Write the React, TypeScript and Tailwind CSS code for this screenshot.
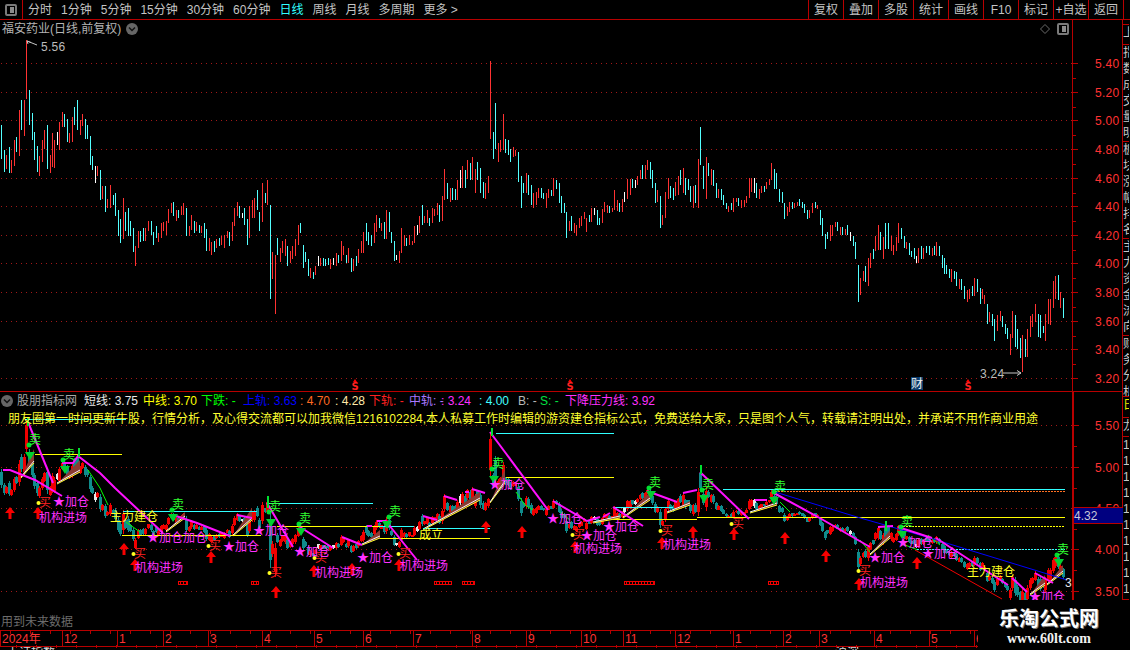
import React from "react";

type Bar = { x: number; t: number; b: number; c: string };

// bars read off the chart: x top bottom colour (crop coordinates at 3x)
const parse = (s: string, ox: number, oy: number): Bar[] =>
  s
    .trim()
    .split("|")
    .map((r) => {
      const [x, t, b, c] = r.trim().split(" ");
      return { x: Math.round(ox + Number(x) / 3), t: oy + Number(t) / 3, b: oy + Number(b) / 3, c };
    });

const bars: Bar[] = [
  ...parse(
    "4 255 357 c|13 330 395 c|19 345 387 r|28 321 399 c|34 360 399 r|43 300 378 r|49 291 336 c|58 210 348 r|64 180 270 c|73 180 288 r|79 0 177 r|88 150 255 c|95 219 300 c|103 276 360 c|110 318 396 c|118 348 408 r|127 300 366 r|133 270 327 r|142 255 387 c|149 345 399 r|157 279 381 r|163 300 384 r|172 276 315 w|178 246 330 r|187 216 261 r|193 222 261 c|202 237 306 c|208 279 309 r|217 231 306 r|223 201 255 c|232 180 270 c|241 240 285 r|247 222 258 r|256 237 297 c|262 255 297 c|271 288 375 c|277 348 390 c|286 378 429 w|292 378 408 r|301 390 480 c|307 438 477 r|316 438 516 c|322 477 504 r|331 435 504 r|340 465 495 c|346 459 528 c|355 510 588 c|361 537 609 c|370 474 597 r|376 516 573 c|385 504 588 c|391 543 588 c|400 564 636 c|406 618 678 r|415 573 624 r|421 573 606 c|430 564 603 c|436 564 603 r|445 543 573 r|454 543 585 c|460 576 615 c|469 558 594 c|475 579 606 r|484 549 594 r|490 546 573 r|499 543 585 r|505 507 549 r|514 489 519 r|520 486 528 c|529 510 543 r|535 510 534 c|544 498 525 r|550 489 525 r|559 504 588 c|568 558 588 r|574 525 570 r|583 543 579 c|589 546 573 r|598 555 579 c|604 558 579 r|613 549 594 c|619 567 633 c|628 594 633 r|634 606 645 r|643 603 636 c|649 597 624 r|658 594 618 c|664 588 615 r|673 585 624 r|682 573 594 r|688 576 618 c|697 546 603 r|703 504 558 r|712 486 528 r|718 498 534 c|727 519 534 w|733 504 555 c|742 537 615 c|748 498 594 r|757 480 534 r|763 474 534 r|772 450 510 c|778 516 573 c|787 429 546 r|796 459 489 c|802 420 495 r|811 495 777 c|817 636 717 r|826 645 822 r|832 594 645 c|841 624 666 r|847 603 639 r|856 597 648 r|862 618 678 c|871 633 669 r|877 618 657 r|886 597 648 r|895 555 615 r|901 549 579 c|910 615 684 c|916 636 666 c|925 657 708 c|931 684 714 r|940 696 717 c|946 678 705 r|955 648 678 w|961 654 678 r|970 654 678 c|976 657 678 c|985 654 675 c|991 657 687 r|1000 654 675 w|1009 639 678 r|1015 645 669 c|1024 603 663 r|1030 618 645 r|1039 645 669 c|1045 624 669 r|1054 654 696 c|1060 657 693 r|1069 648 678 c|1075 627 669 r|1084 603 639 r|1090 576 639 r|1099 549 603 c|1105 576 615 c|1114 585 618 c|1123 549 609 r|1129 525 576 r|1138 534 564 c",
    0,
    40
  ),
  ...parse(
    "4 519 543 r|13 516 567 c|19 480 567 r|28 486 546 c|34 546 579 c|43 573 633 c|49 615 630 w|58 603 639 r|64 534 609 r|73 555 588 r|79 564 588 c|88 555 585 r|97 573 585 r|103 528 579 r|112 525 555 w|118 498 549 r|127 465 525 c|133 498 519 r|142 480 519 r|148 504 528 c|157 474 519 r|163 477 498 r|172 459 495 r|178 465 516 c|187 438 513 r|193 357 450 r|202 399 447 c|211 414 456 r|217 414 450 c|226 417 450 c|232 390 450 r|241 360 414 w|247 348 414 r|256 360 414 c|262 330 387 r|271 339 390 c|277 321 390 r|286 357 429 r|292 336 390 c|301 354 429 c|310 396 444 c|316 399 447 r|325 378 429 r|331 33 267 r|340 246 327 c|346 159 297 c|355 279 336 r|361 270 306 r|370 192 300 r|376 267 309 c|385 270 315 c|391 297 336 c|400 291 321 r|406 300 318 r|415 306 396 c|424 378 474 c|430 399 429 c|439 369 429 r|445 375 435 c|454 405 465 c|460 429 474 r|469 426 465 r|475 414 444 r|484 414 444 c|490 429 447 c|499 429 474 r|505 417 444 r|514 420 438 c|520 384 438 r|529 390 417 c|538 399 459 c|544 438 489 c|553 459 489 c|559 486 564 c|568 513 543 r|574 498 543 c|583 519 549 r|589 525 558 r|598 504 534 r|604 498 528 r|613 486 507 r|619 504 546 r|628 495 516 c|634 474 516 r|643 474 495 w|652 480 525 c|658 504 525 c|667 477 519 r|673 456 486 r|682 465 489 r|688 468 489 c|697 474 486 r|703 420 480 r|712 450 483 r|718 459 486 c|727 447 486 r|733 426 456 w|742 387 447 r|751 387 435 r|757 387 414 c|766 390 414 w|772 378 405 r|781 360 387 r|787 345 387 c|796 345 387 r|802 330 360 r|811 336 387 c|817 360 414 c|826 399 459 c|832 420 456 r|841 438 534 c|847 495 525 r|856 426 504 r|865 384 447 r|871 408 444 c|880 414 450 c|886 396 438 r|895 378 435 r|901 360 405 c|910 354 429 r|916 384 435 c|925 387 420 c|931 408 456 c|940 408 474 r|946 405 459 c|955 327 474 r|961 231 345 c|970 348 417 c|979 321 447 r|985 339 378 c|994 357 405 r|1000 360 408 c|1009 399 444 c|1015 417 444 r|1024 417 450 c|1030 435 465 c|1039 459 477 c|1045 468 486 r|1054 459 480 c|1060 444 486 r|1069 444 456 r|1075 444 468 c|1084 450 474 r|1093 450 471 r|1099 438 459 r|1108 384 444 r",
    380,
    50
  ),
  ...parse(
    "4 174 216 r|13 174 219 w|19 189 234 c|28 207 237 r|34 198 219 r|43 198 216 c|49 186 207 r|58 177 195 r|64 129 180 r|73 147 207 c|79 159 207 c|88 207 246 c|97 216 249 c|103 249 297 c|112 261 288 r|118 246 276 r|127 246 267 c|133 249 264 r|142 246 258 r|148 237 258 c|157 246 264 c|163 252 279 c|172 270 297 c|178 270 294 r|187 249 279 r|196 246 264 c|202 255 267 r|211 270 315 c|217 294 348 c|226 342 387 c|232 336 357 c|241 315 363 r|247 315 348 r|256 306 321 r|262 306 333 c|271 321 345 r|277 321 345 c|286 327 345 r|292 315 345 c|301 336 363 w|310 348 378 c|316 366 417 c|325 435 546 c|331 474 525 r|340 453 483 r|346 438 486 c|355 414 498 r|361 399 444 r|370 387 417 c|376 348 393 r|385 315 390 r|391 336 390 c|400 351 417 r|406 309 387 c|415 309 387 c|424 348 393 r|430 375 405 r|439 351 393 r|445 309 369 r|454 324 357 c|463 348 384 c|469 366 387 r|478 369 405 c|484 393 411 c|493 384 417 c|499 408 429 w|505 384 429 r|514 378 417 c|520 384 417 r|529 378 399 c|538 378 405 c|547 384 408 r|553 378 405 c|559 366 408 r|568 378 408 c|577 405 444 c|583 414 462 c|589 435 462 c|598 447 474 c|604 447 486 r|613 453 477 c|619 456 498 c|628 477 507 r|634 477 510 c|643 498 537 c|652 510 546 r|658 507 537 r|667 498 528 c|673 474 528 r|682 477 516 c|691 504 552 c|697 507 537 r|703 525 552 r|712 552 612 c|718 576 606 r|727 582 618 c|733 597 663 c|742 585 633 r|751 573 603 r|757 588 621 c|766 612 642 c|772 624 657 c|781 642 705 r|787 573 654 r|796 585 681 c|802 627 687 c|811 654 714 c|817 645 756 r|826 657 711 c|832 627 711 r|841 588 651 r|847 582 621 r|856 552 606 r|865 582 651 c|871 585 654 c|880 618 639 c|886 582 663 r|895 537 612 r|901 537 615 r|910 483 564 r|916 468 537 r|925 465 540 c|931 516 564 r|940 534 594 c",
    750,
    120
  ),
];

const RED = "#b80000";
const TOP_COLORS: Record<string, string> = { c: "#54ffff", r: "#ff3232", w: "#ffffff" };
const LOW_COLORS: Record<string, string> = { c: "#0f8c8c", r: "#f00000", w: "#e8e8e8" };

// the lower pane shows the same bars on its own price scale
const toLow = (y: number) => 433.2 + (y - 63) * 0.572;

const MAGENTA_LINES = [
  "3,470 10,470 35,480 62,496",
  "28,422 53,483",
  "62,463 73,463 78,456 100,473 115,488 163,533",
  "173,515 197,523 230,536",
  "237,515 252,518",
  "267,503 293,547",
  "300,527 333,548",
  "342,537 362,545",
  "367,526 372,526",
  "377,521 385,521",
  "385,520 417,560",
  "423,516 437,520",
  "444,496 457,500",
  "465,492 469,492",
  "472,489 485,493",
  "490,432 548,510",
  "553,501 587,521 600,517",
  "603,517 610,513",
  "613,507 643,526",
  "647,491 677,502",
  "683,493 697,490",
  "700,472 749,519",
  "755,500 767,500",
  "772,492 818,517 870,547",
  "878,527 893,526",
  "898,527 932,538",
  "936,538 1008,585",
  "1012,578 1027,592",
  "1035,573 1053,583",
];

const H_LINES: [number, number, number, string, boolean?][] = [
  [35, 122, 454, "#ffff00"],
  [25, 126, 419, "#30ffff"],
  [123, 257, 511, "#30ffff"],
  [122, 261, 535, "#ffff00"],
  [267, 373, 503, "#30ffff"],
  [277, 413, 526, "#ffff00"],
  [380, 414, 526, "#30ffff"],
  [423, 490, 528, "#30ffff"],
  [380, 490, 538, "#ffff00"],
  [496, 614, 433, "#30ffff"],
  [506, 614, 477, "#ffff00"],
  [613, 673, 507, "#30ffff"],
  [613, 697, 519, "#ffff00"],
  [723, 1065, 489, "#30ffff"],
  [772, 1065, 491, "#ff7020", true],
  [697, 1065, 517, "#ffff00"],
  [900, 1065, 526, "#ffff00", true],
  [917, 1065, 549, "#30ffff", true],
];

const WEDGES: [number, number, number, number, number][] = [
  [21, 478, 34, 463, 14],
  [57, 484, 80, 472, 12],
  [166, 532, 185, 518, 6],
  [233, 536, 252, 520, 12],
  [362, 545, 380, 538, 8],
  [423, 530, 480, 500, 8],
  [490, 503, 505, 483, 14],
  [593, 523, 620, 518, 3],
  [623, 518, 650, 500, 8],
  [667, 513, 690, 505, 4],
  [750, 513, 777, 505, 4],
  [870, 555, 890, 538, 8],
  [1030, 595, 1045, 585, 10],
  [1047, 585, 1063, 573, 8],
];

const THIN_GREEN = [
  "88,470 100,488 108,505",
  "126,522 140,532",
  "516,492 525,505 533,510",
  "560,512 570,520",
  "780,502 790,512",
  "860,540 870,552",
  "905,545 918,550",
  "928,535 940,545",
];

const SELLS = [
  [35, 440, 30, 456],
  [69, 455, 65, 470],
  [178, 505, 173, 518],
  [275, 507, 271, 523],
  [305, 519, 301, 532],
  [395, 512, 387, 525],
  [498, 464, 494, 480],
  [655, 483, 651, 495],
  [708, 485, 704, 499],
  [780, 487, 774, 501],
  [907, 522, 902, 535],
  [1063, 550, 1059, 563],
];

const SPIKES = [
  [27, 417, 426],
  [78, 448, 457],
  [267, 496, 508],
  [491, 428, 436],
  [700, 465, 474],
  [885, 521, 531],
];

const BUYS = [
  [45, 503],
  [140, 554],
  [215, 546],
  [276, 573],
  [321, 558],
  [405, 554],
  [579, 535],
  [667, 531],
  [738, 524],
  [865, 571],
];

const ARROWS = [
  [10, 513],
  [38, 513],
  [124, 549],
  [135, 565],
  [211, 557],
  [276, 592],
  [314, 571],
  [352, 569],
  [399, 565],
  [486, 527],
  [522, 532],
  [575, 547],
  [662, 543],
  [693, 532],
  [734, 534],
  [785, 538],
  [826, 556],
  [917, 563],
  [859, 584],
];

const ENTRIES = [
  [39, 518],
  [135, 568],
  [315, 573],
  [400, 566],
  [574, 549],
  [663, 545],
  [860, 583],
];

const ADDS: [number, number, string][] = [
  [53, 502, "★加仓"],
  [147, 538, "★加仓加仓"],
  [223, 547, "★加仓"],
  [253, 531, "★加仓"],
  [294, 552, "★加仓"],
  [357, 558, "★加仓"],
  [489, 485, "★加仓"],
  [547, 519, "★加仓"],
  [581, 536, "★加仓"],
  [603, 527, "★加仓"],
  [869, 558, "★加仓"],
  [897, 543, "★加仓"],
  [922, 554, "★加仓"],
  [1029, 597, "★加仓"],
];

const SMALL_RECTS = [
  [178, 187],
  [251, 258],
  [434, 451],
  [462, 474],
  [624, 654],
  [768, 778],
];

const TOP_TICKS = ["5.40", "5.20", "5.00", "4.80", "4.60", "4.40", "4.20", "4.00", "3.80", "3.60", "3.40", "3.20"];
const TOP_Y = [63, 92, 120, 149, 178, 206, 235, 263, 292, 321, 349, 378];
const LOW_TICKS: [string, number][] = [
  ["5.50", 425],
  ["5.00", 467],
  ["4.50", 508],
  ["4.00", 549],
  ["3.50", 591],
];

const PERIODS = ["分时", "1分钟", "5分钟", "15分钟", "30分钟", "60分钟", "日线", "周线", "月线", "多周期"];
const ACTIONS = ["复权", "叠加", "多股", "统计", "画线", "F10", "标记", "+自选", "返回"];

const LEGEND: [string, string, string][] = [
  ["短线: 3.75", "#e8e8e8", "w-[59px]"],
  ["中线: 3.70", "#ffff00", "w-[58px]"],
  ["下跌: -", "#00ff00", "w-[42px]"],
  ["上轨: 3.63", "#0000ff", "w-[57px]"],
  [": 4.70", "#ff6a20", "w-[35px]"],
  [": 4.28", "#ffe9a8", "w-[34px]"],
  ["下轨: -", "#ff2020", "w-[40px]"],
  ["中轨: -", "#a878ff", "w-[32px]"],
  [": 3.24", "#ff30ff", "w-[38px]"],
  [": 4.00", "#40ffff", "w-[39px]"],
  ["B: -", "#b8b8b8", "w-[22px]"],
  ["S: -", "#00e040", "w-[25px]"],
  ["下降压力线: 3.92", "#ff30ff", "w-[110px]"],
];

const MONTHS: [string, number][] = [
  ["2024年", 62],
  ["12", 55],
  ["1", 46],
  ["2", 45],
  ["3", 54],
  ["4", 52],
  ["5", 49],
  ["6", 50],
  ["7", 59],
  ["8", 54],
  ["9", 55],
  ["10", 42],
  ["11", 52],
  ["12", 58],
  ["1", 50],
  ["2", 36],
  ["3", 55],
  ["4", 55],
  ["5", 45],
  ["6", 4],
];

const STRIP: { h: string; text: string; color?: string }[] = [
  { h: "h-[5px]", text: "" },
  { h: "h-[20px]", text: "上" },
  { h: "h-[97px]", text: "指数成交量明细" },
  { h: "h-[97px]", text: "板块涨幅排名" },
  { h: "h-[97px]", text: "主力资金流向" },
  { h: "h-[61px]", text: "财务分析" },
  { h: "h-[21px]", text: "日", color: "#e8e800" },
  { h: "h-[19px]", text: "龙" },
  { h: "h-[163px]", text: "1111111111" },
];

const PaneIcon = () => (
  <div className="flex h-[12px] w-[12px] justify-end rounded-[2px] border-2 border-[#7a7a7a] p-px">
    <div className="w-[4px] bg-[#8c8c8c]" />
  </div>
);

const DownBadge = () => (
  <svg width="12" height="12" viewBox="0 0 12 12">
    <circle cx="6" cy="6" r="6" fill="#666666" />
    <path d="M3 4.5 L6 7.5 L9 4.5" fill="none" stroke="#111111" strokeWidth="1.5" />
  </svg>
);

const TopChart = () => (
  <svg width="1072" height="371" viewBox="0 20 1072 371" className="block" shapeRendering="crispEdges">
    {TOP_Y.map((y) => (
      <line key={y} x1="1" x2="1072" y1={y + 0.5} y2={y + 0.5} stroke="#a01818" strokeDasharray="1 4" />
    ))}
    {bars.map((b, i) => (
      <rect key={i} x={b.x} y={b.t} width="1" height={b.b - b.t} fill={TOP_COLORS[b.c]} />
    ))}
    <g shapeRendering="auto" fill="none" stroke="#c4c4c4">
      <path d="M27 41 L37 45" />
      <path d="M27 41 L31 42.5 M27 41 L28 44" />
      <path d="M1003 373 L1021 373 M1017 370.5 L1021 373 L1017 375.5" />
    </g>
    <text x="41" y="46.5" fontSize="12" fill="#bcbcbc" dominantBaseline="central" letterSpacing="0.3">5.56</text>
    <text x="980" y="374" fontSize="12" fill="#bcbcbc" dominantBaseline="central" letterSpacing="0.3">3.24</text>
    {[355, 570, 968].map((x) => (
      <g key={x}>
        <path d={`M${x - 2} 382 L${x + 2} 382 L${x} 379 Z`} fill="#ff0000" shapeRendering="auto" />
        <text x={x} y="390" fontSize="10" fontWeight="700" fill="#ff2020" textAnchor="middle" fontFamily="'DejaVu Sans',sans-serif">
          S
        </text>
      </g>
    ))}
  </svg>
);

const LowerChart = () => (
  <svg width="1072" height="238" viewBox="0 392 1072 238" className="block" shapeRendering="crispEdges">
    {LOW_TICKS.map(([t, y]) => (
      <line key={t} x1="1" x2="1072" y1={y + 0.5} y2={y + 0.5} stroke="#a01818" strokeDasharray="1 4" />
    ))}
    {bars.map((b, i) => {
      const t = toLow(b.t);
      const h = toLow(b.b) - t;
      return (
        <g key={i} fill={LOW_COLORS[b.c]}>
          <rect x={b.x} y={t} width="1" height={h} />
          <rect x={b.x - 1} y={t + h * 0.15} width="3" height={Math.max(h * 0.7, 1)} />
        </g>
      );
    })}
    {WEDGES.map(([x1, y1, x2, y2, th], i) => (
      <g key={i} shapeRendering="auto">
        <polygon points={`${x1},${y1} ${x2},${y2} ${x2},${y2 - th}`} fill="#8b3a32" />
        <line x1={x1} y1={y1} x2={x2} y2={y2} stroke="#ffff30" />
        <line x1={x1} y1={y1 - 1} x2={x2} y2={y2 - 2} stroke="#f4f4f4" />
      </g>
    ))}
    {THIN_GREEN.map((p) => (
      <polyline key={p} points={p} fill="none" stroke="#00ff00" shapeRendering="auto" />
    ))}
    {H_LINES.map(([x1, x2, y, c, dotted]) => (
      <line
        key={`${x1}-${y}`}
        x1={x1}
        x2={x2}
        y1={y + 0.5}
        y2={y + 0.5}
        stroke={c}
        strokeDasharray={dotted ? "2 1" : undefined}
      />
    ))}
    <polyline points="775,492 857,517 930,538 1067,580" fill="none" stroke="#0000ff" shapeRendering="auto" />
    <polyline points="915,550 1002,599" fill="none" stroke="#f00000" shapeRendering="auto" />
    {MAGENTA_LINES.map((p) => (
      <polyline key={p} points={p} fill="none" stroke="#ff10ff" strokeWidth="2" shapeRendering="auto" />
    ))}
    {SMALL_RECTS.map(([x1, x2]) => (
      <g key={x1} fill="none" stroke="#f00000">
        <rect x={x1 + 0.5} y="581.5" width={x2 - x1} height="3" />
        <line x1={x1 + 2} x2={x2} y1="583" y2="583" strokeWidth="2" strokeDasharray="1 2" />
      </g>
    ))}
    {SPIKES.map(([x, y1, y2]) => (
      <rect key={x} x={x - 0.5} y={y1} width="2" height={y2 - y1} fill="#00e030" />
    ))}
    {SELLS.map(([tx, ty, ax, ay]) => (
      <g key={tx} shapeRendering="auto">
        <path d={`M${ax - 5} ${ay - 4} L${ax + 5} ${ay - 4} L${ax} ${ay + 4} Z`} fill="#00d030" />
        <circle cx={tx - 6} cy={ty + 5} r="2.5" fill="#00e030" />
        <text x={tx} y={ty} fontSize="12" fill="#30ff30" textAnchor="middle" dominantBaseline="central">
          卖
        </text>
      </g>
    ))}
    {ARROWS.map(([x, y]) => (
      <path
        key={`${x}-${y}`}
        d={`M${x} ${y - 6} L${x + 5} ${y} L${x + 1.5} ${y} L${x + 1.5} ${y + 6} L${x - 1.5} ${y + 6} L${x - 1.5} ${y} L${x - 5} ${y} Z`}
        fill="#f80000"
        shapeRendering="auto"
      />
    ))}
    {BUYS.map(([x, y]) => (
      <g key={x}>
        <text x={x} y={y} fontSize="12" fill="#ff2020" textAnchor="middle" dominantBaseline="central">
          买
        </text>
        <circle cx={x - 6.5} cy={y} r="2" fill="#ffff20" shapeRendering="auto" />
      </g>
    ))}
    {ENTRIES.map(([x, y]) => (
      <text key={x} x={x} y={y} fontSize="12" fill="#ff30ff" dominantBaseline="central">
        机构进场
      </text>
    ))}
    {ADDS.map(([x, y, t]) => (
      <text key={x} x={x} y={y} fontSize="12" fill="#ff30ff" dominantBaseline="central">
        {t}
      </text>
    ))}
    <text x="110" y="517" fontSize="12" fill="#ffff20" dominantBaseline="central">主力建仓</text>
    <text x="967" y="572" fontSize="12" fill="#ffff20" dominantBaseline="central">主力建仓</text>
    <text x="419" y="535" fontSize="12" fill="#ffff20" dominantBaseline="central">成立</text>
    <text x="1065" y="583" fontSize="12" fill="#e8e8e8" dominantBaseline="central">3.6</text>
  </svg>
);

const TopAxis = () => (
  <svg width="50" height="371" viewBox="1073 20 50 371" className="block" shapeRendering="crispEdges">
    {TOP_Y.map((y, i) => (
      <g key={y}>
        <line x1="1073" x2="1078" y1={y + 0.5} y2={y + 0.5} stroke={RED} />
        <line x1="1073" x2="1076" y1={y + 15.5} y2={y + 15.5} stroke={RED} />
        <text x="1095" y={y + 1} fontSize="12" fill="#ff3232" dominantBaseline="central" letterSpacing="0.3">
          {TOP_TICKS[i]}
        </text>
      </g>
    ))}
  </svg>
);

const LowerAxis = () => (
  <svg width="49" height="238" viewBox="1074 392 49 238" className="block" shapeRendering="crispEdges">
    {LOW_TICKS.map(([t, y]) => (
      <g key={t}>
        <line x1="1074" x2="1079" y1={y + 0.5} y2={y + 0.5} stroke={RED} />
        <line x1="1074" x2="1077" y1={y + 21.5} y2={y + 21.5} stroke={RED} />
        <text x="1095" y={y + 1} fontSize="12" fill="#ff3232" dominantBaseline="central" letterSpacing="0.3">
          {t}
        </text>
      </g>
    ))}
  </svg>
);

const TimeTicks = () => (
  <svg width="978" height="17" className="absolute left-0 top-0" shapeRendering="crispEdges">
    {Array.from({ length: 49 }, (_, i) => (
      <g key={i} fill="#b80000">
        <rect x={10 + i * 20} y="0" width="1" height="3" />
        <rect x={16 + i * 20} y="14" width="1" height="3" />
      </g>
    ))}
  </svg>
);

export default function App() {
  return (
    <div className="relative flex h-[650px] w-[1130px] flex-col overflow-hidden bg-black font-['Liberation_Sans','Noto_Sans_CJK_SC',sans-serif] text-[12px] leading-none text-[#c4c4c4]">
      {/* toolbar */}
      <div className="flex h-[20px] shrink-0 border-b border-[#b80000]">
        <div className="flex w-[23px] items-center justify-center border-r border-[#b80000]">
          <PaneIcon />
        </div>
        <div className="ml-[5px] flex items-center gap-[9px]">
          {PERIODS.map((p) => (
            <span key={p} className={p === "日线" ? "text-[#30ffff]" : ""}>
              {p}
            </span>
          ))}
          <span>更多 &gt;</span>
        </div>
        <div className="ml-auto mr-[6px] flex">
          {ACTIONS.map((a) => (
            <div key={a} className="flex w-[35px] items-center justify-center border-l border-[#b80000]">
              {a}
            </div>
          ))}
          <div className="border-l border-[#b80000]" />
        </div>
      </div>

      <div className="flex h-[610px] shrink-0">
        <div className="w-[1072px] shrink-0">
          {/* price pane */}
          <div className="relative h-[372px] border-b border-[#b80000]">
            <TopChart />
            <div className="absolute left-[2px] top-[3px] flex items-center gap-[5px]">
              <span className="text-[#b4b4b4]">福安药业(日线,前复权)</span>
              <DownBadge />
            </div>
            <div className="absolute right-[3px] top-[3px] flex items-center gap-[7px]">
              <svg width="10" height="10" viewBox="0 0 10 10">
                <path d="M5 0.5 L9.5 5 L5 9.5 L0.5 5 Z" fill="none" stroke="#6a6a6a" />
              </svg>
              <PaneIcon />
            </div>
            <div className="absolute left-[911px] top-[357px] flex h-[13px] w-[12px] items-center justify-center bg-[#0c3c6c] text-[#f0f0f0]">
              财
            </div>
          </div>
          {/* indicator pane */}
          <div className="relative h-[238px]">
            <LowerChart />
            <div className="absolute left-0 top-[2px] flex h-[14px] items-center whitespace-nowrap">
              <div className="ml-[1px] mr-[4px] flex">
                <DownBadge />
              </div>
              <span className="w-[67px] text-[#a8a8a8]">股朋指标网</span>
              {LEGEND.map(([t, c, w]) => (
                <span key={t} className={w} style={{ color: c }}>
                  {t}
                </span>
              ))}
            </div>
            <div className="absolute left-[8px] top-[21px] whitespace-nowrap text-[#ffff30]">
              朋友圈第一时间更新牛股，行情分析，及心得交流都可以加我微信1216102284,本人私募工作时编辑的游资建仓指标公式，免费送给大家，只是图个人气，转载请注明出处，并承诺不用作商业用途
            </div>
            <div className="absolute bottom-[2px] left-[1px] text-[#6c6c6c]">用到未来数据</div>
          </div>
        </div>

        {/* price axis */}
        <div className="w-[51px] shrink-0 border-r border-[#b80000]">
          <div className="h-[372px] border-b border-l border-[#b80000]">
            <TopAxis />
          </div>
          <div className="relative h-[238px] border-l-[2px] border-[#b80000]">
            <LowerAxis />
            <div className="absolute left-0 top-[115px] flex h-[17px] w-[49px] items-center border-y border-[#b80000] bg-[#000080] text-[#c8c8d8]">
              4.32
            </div>
          </div>
        </div>

        {/* side list, only its edge is on screen */}
        <div className="w-[6px] shrink-0 overflow-hidden">
          {STRIP.map((s, i) => (
            <div key={i} className={`${s.h} overflow-hidden border-b border-[#b80000]`}>
              <div className="w-[12px] break-all leading-[16px]" style={{ color: s.color ?? "#c8c8c8" }}>
                {s.text}
              </div>
            </div>
          ))}
        </div>
      </div>

      {/* time axis */}
      <div className="relative flex h-[17px] w-[978px] shrink-0 border-y border-[#b80000] text-[#ff3232]">
        <TimeTicks />
        {MONTHS.map(([m, w], i) => (
          <div key={i} className="flex items-center overflow-hidden border-l border-[#b80000] pl-[1px]" style={{ width: w }}>
            {m}
          </div>
        ))}
      </div>
      <div className="flex h-[3px] gap-[780px] overflow-hidden pl-[7px] text-[#d8d8d8]">
        <span>上证指数</span>
        <span>沪深</span>
      </div>

      {/* watermark over the corner */}
      <div className="absolute bottom-0 right-0 flex h-[50px] w-[152px] flex-col items-center bg-black pt-[8px] pr-[10px]">
        <span className="text-[20px] font-bold leading-[22px] text-white [text-shadow:1px_1px_0_#777]">乐淘公式网</span>
        <span className="mt-[2px] font-['Liberation_Serif',serif] text-[14px] font-bold text-[#f0f0f0]">www.60lt.com</span>
      </div>
    </div>
  );
}
